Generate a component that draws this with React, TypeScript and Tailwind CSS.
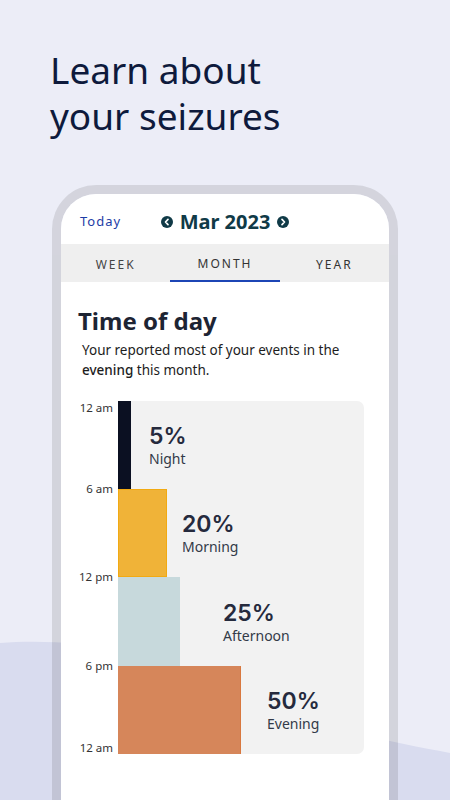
import React from 'react'

const segments = [
  { pct: '5%', name: 'Night', bar: 'w-[13px] bg-[#0b1022]', label: 'pl-[31px]', h: 'h-[88px]' },
  { pct: '20%', name: 'Morning', bar: 'w-[49px] bg-[#f0b338] border border-[#f2aa12]', label: 'pl-[64px]', h: 'h-[88px]' },
  { pct: '25%', name: 'Afternoon', bar: 'w-[62px] bg-[#c7d9dc]', label: 'pl-[105px]', h: 'h-[89px]' },
  { pct: '50%', name: 'Evening', bar: 'w-[123px] bg-[#d6865a] border-r border-[#d8783f]', label: 'pl-[149px]', h: 'h-[88px]' },
]

const ticks = [
  { text: '12 am', pos: 'top-[0px]' },
  { text: '6 am', pos: 'top-[81px]' },
  { text: '12 pm', pos: 'top-[169px]' },
  { text: '6 pm', pos: 'top-[258px]' },
  { text: '12 am', pos: 'top-[340px]' },
]

function CircleArrow({ dir }: { dir: 'left' | 'right' }) {
  return (
    <svg width="12" height="12" viewBox="0 0 12 12" className="shrink-0">
      <circle cx="6" cy="6" r="6" fill="#103a47" />
      {dir === 'left' ? (
        <path d="M7 3.4 4.5 6 7 8.6" fill="none" stroke="#fff" strokeWidth="1.7" strokeLinecap="round" strokeLinejoin="round" />
      ) : (
        <path d="M5 3.4 7.5 6 5 8.6" fill="none" stroke="#fff" strokeWidth="1.7" strokeLinecap="round" strokeLinejoin="round" />
      )}
    </svg>
  )
}

export default function App() {
  return (
    <div className="relative h-[800px] w-[450px] overflow-hidden bg-[#ecedf7] font-['Noto_Sans',sans-serif]">
      {/* background wave */}
      <svg className="absolute inset-0" width="450" height="800" viewBox="0 0 450 800">
        <path d="M0 643 C 60 638, 150 645, 250 695 C 320 728, 390 742, 450 753 L450 800 L0 800 Z" fill="#d9dcef" />
      </svg>

      <div className="relative">
        <h1 className="px-[50px] pt-[47px] text-[37px] leading-[46px] font-normal text-[#0e1a3c]">
          Learn about
          <br />
          your seizures
        </h1>

        {/* Phone */}
        <div className="mt-[46px] ml-[52px] h-[640px] w-[346px] rounded-t-[44px] border-[9px] border-b-0 border-black/10">
          <div className="h-full overflow-hidden rounded-t-[35px] bg-white">
            <div className="grid h-[50px] grid-cols-[1fr_auto_1fr] items-center pt-[6px]">
              <span className="pl-[19px] text-[13px] tracking-[1px] text-[#1c3ca6]">Today</span>
              <div className="flex items-center gap-[7px]">
                <CircleArrow dir="left" />
                <span className="text-[20px] font-bold text-[#103a47]">Mar 2023</span>
                <CircleArrow dir="right" />
              </div>
              <span />
            </div>

            <div className="grid h-[38px] grid-cols-3 bg-[#efefef] pt-[3px] text-[12px] tracking-[2px] text-[#444]">
              <div className="flex items-center justify-center">WEEK</div>
              <div className="flex items-center justify-center border-b-2 border-[#1c45b5] pt-[1px] text-[#333]">MONTH</div>
              <div className="flex items-center justify-center text-[#333]">YEAR</div>
            </div>

            <div className="px-[17px] pt-[24px]">
              <h2 className="text-[24px] leading-[30px] font-bold text-[#1d2433]">Time of day</h2>
              <p className="mt-[4px] pl-[4px] text-[13.5px] leading-[20px] text-[#1d1d1d]">
                Your reported most of your events in the <span className="font-medium">evening</span> this month.
              </p>

              <div className="mt-[21px] flex">
                <div className="relative h-[353px] w-[40px] pr-[5px] text-right text-[11.5px] text-[#333]">
                  {ticks.map((t, i) => (
                    <span key={i} className={`absolute right-[5px] leading-[14px] whitespace-nowrap ${t.pos}`}>{t.text}</span>
                  ))}
                </div>
                <div className="flex w-[246px] flex-col overflow-hidden rounded-r-[7px] bg-[#f2f2f2]">
                  {segments.map((s) => (
                    <div key={s.name} className={`relative flex ${s.h}`}>
                      <div className={`h-full ${s.bar}`} />
                      <div className={`absolute inset-y-0 left-0 flex flex-col justify-center ${s.label}`}>
                        <span className="font-['Inter',sans-serif] text-[23px] leading-[28px] font-semibold text-[#252a3d]">{s.pct}</span>
                        <span className="text-[14px] leading-[18px] text-[#333a48]">{s.name}</span>
                      </div>
                    </div>
                  ))}
                </div>
              </div>
            </div>
          </div>
        </div>
      </div>
    </div>
  )
}
